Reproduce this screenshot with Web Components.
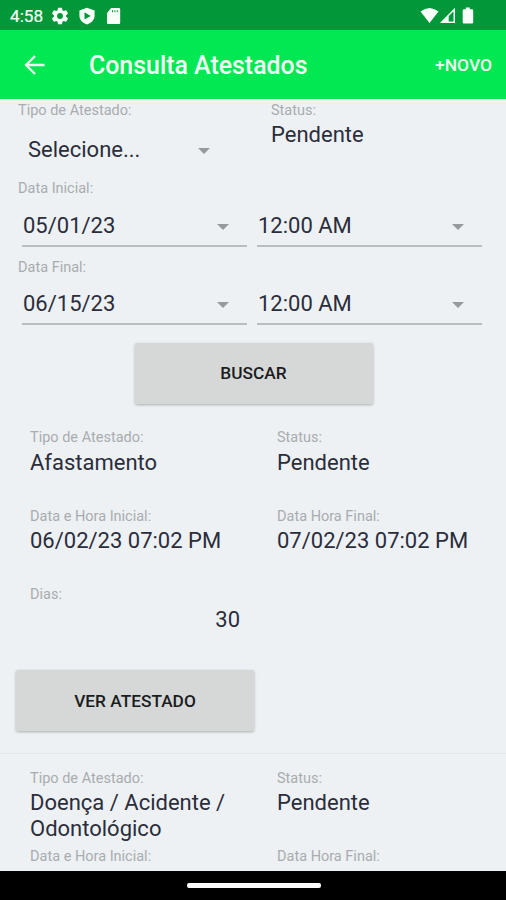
<!DOCTYPE html>
<html lang="pt-BR">
<head>
<meta charset="utf-8">
<title>Consulta Atestados</title>
<style>
  html, body {
    margin: 0;
    height: 100%;
    overflow: hidden;
    background: #edf1f4;
    font-family: Roboto, "Liberation Sans", sans-serif;
  }
</style>
</head>
<body>
<x-app></x-app>
<script>
class BaseElement extends HTMLElement {
  constructor() {
    super();
    this._shadowRoot = this.attachShadow({mode: 'open'});
    const template = document.createElement('template');
    template.innerHTML = this._template();
    this._shadowRoot.appendChild(template.content.cloneNode(true));
  }
}

class StatusBar extends BaseElement {
  _template() {
    return `
      <style>
        :host {
          display: flex;
          flex: none;
          align-items: center;
          justify-content: space-between;
          box-sizing: border-box;
          height: 30px;
          padding: 1px 32px 0 10px;
          background: #029739;
          color: #f4fff6;
          font-size: 17.2px;
        }
        div {
          display: flex;
          align-items: center;
        }
        svg {
          display: block;
          fill: #f8fff9;
        }
        .time { margin-right: 8px; -webkit-text-stroke: 0.2px; }
        .gear { margin-right: 9px; }
        .shield { margin-right: 10px; }
        .signal { margin: 0 6px 0 0; }
      </style>
      <div>
        <span class="time">4:58</span>
        <svg class="gear" width="18" height="18" viewBox="1.5 1.5 21 21"><path d="M19.14 12.94c.04-.3.06-.61.06-.94s-.02-.64-.07-.94l2.03-1.58a.49.49 0 0 0 .12-.61l-1.92-3.32a.49.49 0 0 0-.59-.22l-2.39.96a7 7 0 0 0-1.62-.94l-.36-2.54a.48.48 0 0 0-.48-.41h-3.84a.48.48 0 0 0-.47.41l-.36 2.54c-.59.24-1.13.57-1.62.94l-2.39-.96a.48.48 0 0 0-.59.22L2.74 8.87a.48.48 0 0 0 .12.61l2.03 1.58c-.05.3-.09.63-.09.94s.02.64.07.94l-2.03 1.58a.49.49 0 0 0-.12.61l1.92 3.32c.12.22.37.29.59.22l2.39-.96c.5.38 1.03.7 1.62.94l.36 2.54c.05.24.24.41.48.41h3.84c.24 0 .44-.17.47-.41l.36-2.54c.59-.24 1.13-.56 1.62-.94l2.39.96c.22.08.47 0 .59-.22l1.92-3.32a.48.48 0 0 0-.12-.61zM12 15.4a3.4 3.4 0 1 1 0-6.8 3.4 3.4 0 0 1 0 6.8z"/></svg>
        <svg class="shield" width="18" height="18" viewBox="0 0 18 18"><path fill-rule="evenodd" d="M9 .8 16.6 3.600v5c0 4.300-3 7.300-7.600 8.900C4.400 15.900 1.400 12.900 1.400 8.600v-5zM6.500 5.300v7.200l6.200-3.600z"/></svg>
        <svg width="15" height="18" viewBox="0 0 15 18"><path fill-rule="evenodd" d="M5.200 1H13q1.200 0 1.200 1.200v13.600q0 1.200-1.200 1.200H2.200Q1 17 1 15.800V6zM6 3.200v2h1v-2zM8.400 3.200v2h1v-2zM10.800 3.200v2h1v-2z"/></svg>
      </div>
      <div>
        <svg width="19" height="17" viewBox="0 0 19 17"><path d="M.5 4.600Q9.500-2.600 18.500 4.600L9.500 16z"/></svg>
        <svg class="signal" width="17" height="17" viewBox="0 0 17 17"><path fill-rule="evenodd" d="M16 .8V16H.8zM14.500 4.300 9.700 9.200v5.300h4.800z"/></svg>
        <svg width="12" height="17" viewBox="0 0 12 17"><path d="M3.800.5h4v1.700H10q1.200 0 1.200 1.200v11.900q0 1.200-1.200 1.200H1.900q-1.200 0-1.200-1.200V3.400q0-1.200 1.200-1.200h1.900z"/></svg>
      </div>
    `;
  }
}

class AppBar extends BaseElement {
  _template() {
    return `
      <style>
        :host {
          display: flex;
          flex: none;
          align-items: center;
          box-sizing: border-box;
          height: 68.5px;
          padding: 2px 14px 0 24px;
          background: #02e852;
          color: #f4fff6;
          font-weight: 500;
        }
        svg { flex: none; }
        h1 {
          flex: 1;
          margin: 0 0 0 43px;
          font-size: 24.9px;
          font-weight: 500;
          white-space: nowrap;
        }
        .action { font-size: 17.4px; }
      </style>
      <svg width="22" height="22" viewBox="0 0 22 22"><path d="M20.500 11H2.500M11 2 2 11l9 9" fill="none" stroke="#e9ffee" stroke-width="2.300"/></svg>
      <h1><slot></slot></h1>
      <span class="action"><slot name="action"></slot></span>
    `;
  }
}

// Caption with its value below it
class Field extends BaseElement {
  _template() {
    return `
      <style>
        :host {
          display: block;
          box-sizing: border-box;
          height: 78.7px;
        }
        .label {
          display: block;
          color: #a9acae;
          font-size: 14.5px;
          line-height: 17px;
          white-space: nowrap;
        }
        .value {
          display: block;
          color: #2b2d3b;
          font-size: 22px;
          line-height: 26px;
          padding-top: 3.5px;
        }
        :host([numeric]) .value { text-align: right; }
      </style>
      <span class="label"></span>
      <span class="value"><slot></slot></span>
    `;
  }

  connectedCallback() {
    this._shadowRoot.querySelector('.label').textContent = this.getAttribute('label');
  }
}

class Picker extends BaseElement {
  _template() {
    return `
      <style>
        :host {
          display: flex;
          align-items: center;
          justify-content: space-between;
          box-sizing: border-box;
          height: 43px;
          padding: 2px 18px 0 1px;
          border-bottom: 2px solid #b9bdbf;
          color: #2b2d3b;
          font-size: 22px;
        }
        :host([plain]) {
          border-color: transparent;
          padding-left: 6px;
        }
        svg {
          fill: #969a9c;
          margin-top: 3px;
        }
      </style>
      <slot></slot>
      <svg width="12" height="6" viewBox="0 0 12 6"><path d="M0 0h12L6 6z"/></svg>
    `;
  }
}

class RaisedButton extends BaseElement {
  _template() {
    return `
      <style>
        :host { display: block; }
        button {
          display: block;
          width: 238px;
          height: 61px;
          padding: 0;
          border: 0;
          border-radius: 2px;
          background: #d6d8d8;
          box-shadow: 0 1px 3px rgba(0, 0, 0, 0.28);
          color: #1b1c1d;
          font: 500 17.3px Roboto, "Liberation Sans", sans-serif;
        }
      </style>
      <button type="button"><slot></slot></button>
    `;
  }
}

class SearchForm extends BaseElement {
  _template() {
    return `
      <style>
        :host {
          display: block;
          flex: none;
          box-sizing: border-box;
          height: 314.5px;
          padding: 3px 24px 0 18px;
        }
        .filters {
          display: grid;
          grid-template-columns: 253px 1fr;
          height: 78.7px;
        }
        .filters x-picker { margin: 9px 43px 0 4px; }
        .group { height: 78.7px; }
        .label {
          color: #a9acae;
          font-size: 14.5px;
          line-height: 17px;
        }
        .pickers {
          display: grid;
          grid-template-columns: 225px 225px;
          gap: 10px;
          margin: 6.5px 0 0 4px;
        }
        x-button {
          display: flex;
          justify-content: center;
          margin-top: 5px;
          padding-left: 7px;
        }
      </style>
      <div class="filters">
        <div>
          <div class="label">Tipo de Atestado:</div>
          <x-picker plain>Selecione...</x-picker>
        </div>
        <x-field label="Status:">Pendente</x-field>
      </div>
      <div class="group">
        <div class="label">Data Inicial:</div>
        <div class="pickers"><x-picker>05/01/23</x-picker><x-picker>12:00 AM</x-picker></div>
      </div>
      <div class="group">
        <div class="label">Data Final:</div>
        <div class="pickers"><x-picker>06/15/23</x-picker><x-picker>12:00 AM</x-picker></div>
      </div>
      <x-button>BUSCAR</x-button>
    `;
  }
}

class CertificateItem extends BaseElement {
  _template() {
    return `
      <style>
        :host {
          display: block;
          flex: none;
          box-sizing: border-box;
          height: 340.7px;
          padding-top: 16px;
          border-bottom: 1px solid #e1e5e8;
        }
        .fields {
          display: grid;
          grid-template-columns: 210px 211px;
          column-gap: 37px;
          padding-left: 30px;
        }
        x-button { margin: 5px 0 0 16px; }
      </style>
      <div class="fields"></div>
    `;
  }

  set certificate(data) {
    const fields = [
      ['Tipo de Atestado:', data.type],
      ['Status:', data.status],
      ['Data e Hora Inicial:', data.start],
      ['Data Hora Final:', data.end]
    ];
    if (data.days) {
      fields.push(['Dias:', data.days]);
    }
    const container = this._shadowRoot.querySelector('.fields');
    fields.forEach(([label, value]) => {
      const fieldElm = document.createElement('x-field');
      fieldElm.setAttribute('label', label);
      fieldElm.toggleAttribute('numeric', label === 'Dias:');
      fieldElm.textContent = value;
      container.appendChild(fieldElm);
    });
    if (data.days) {
      const buttonElm = document.createElement('x-button');
      buttonElm.textContent = 'VER ATESTADO';
      this._shadowRoot.appendChild(buttonElm);
    }
  }
}

class NavigationBar extends BaseElement {
  _template() {
    return `
      <style>
        :host {
          display: flex;
          flex: none;
          align-items: center;
          justify-content: center;
          box-sizing: border-box;
          height: 29px;
          padding-left: 1px;
          background: #000;
        }
        div {
          width: 134px;
          height: 5px;
          border-radius: 2px;
          background: #fafafa;
        }
      </style>
      <div></div>
    `;
  }
}

class App extends BaseElement {
  constructor() {
    super();
    this._certificates = [
      {
        type: 'Afastamento',
        status: 'Pendente',
        start: '06/02/23 07:02 PM',
        end: '07/02/23 07:02 PM',
        days: '30',
      },
      {
        type: 'Doença / Acidente / Odontológico',
        status: 'Pendente',
        start: '',
        end: '',
        days: '',
      }
    ];
  }

  connectedCallback() {
    const list = this._shadowRoot.querySelector('main');
    this._certificates.forEach((item) => {
      const itemElm = document.createElement('x-certificate');
      itemElm.certificate = item;
      list.appendChild(itemElm);
    });
  }

  _template() {
    return `
      <style>
        :host {
          display: flex;
          flex-direction: column;
          width: 506px;
          height: 900px;
          overflow: hidden;
        }
        main {
          display: flex;
          flex: 1;
          flex-direction: column;
          min-height: 0;
          overflow: hidden;
        }
      </style>
      <x-status-bar></x-status-bar>
      <x-app-bar>Consulta Atestados<span slot="action">+NOVO</span></x-app-bar>
      <main><x-search-form></x-search-form></main>
      <x-navigation-bar></x-navigation-bar>
    `;
  }
}

window.customElements.define('x-status-bar', StatusBar);
window.customElements.define('x-app-bar', AppBar);
window.customElements.define('x-field', Field);
window.customElements.define('x-picker', Picker);
window.customElements.define('x-button', RaisedButton);
window.customElements.define('x-search-form', SearchForm);
window.customElements.define('x-certificate', CertificateItem);
window.customElements.define('x-navigation-bar', NavigationBar);
window.customElements.define('x-app', App);
</script>
</body>
</html>
